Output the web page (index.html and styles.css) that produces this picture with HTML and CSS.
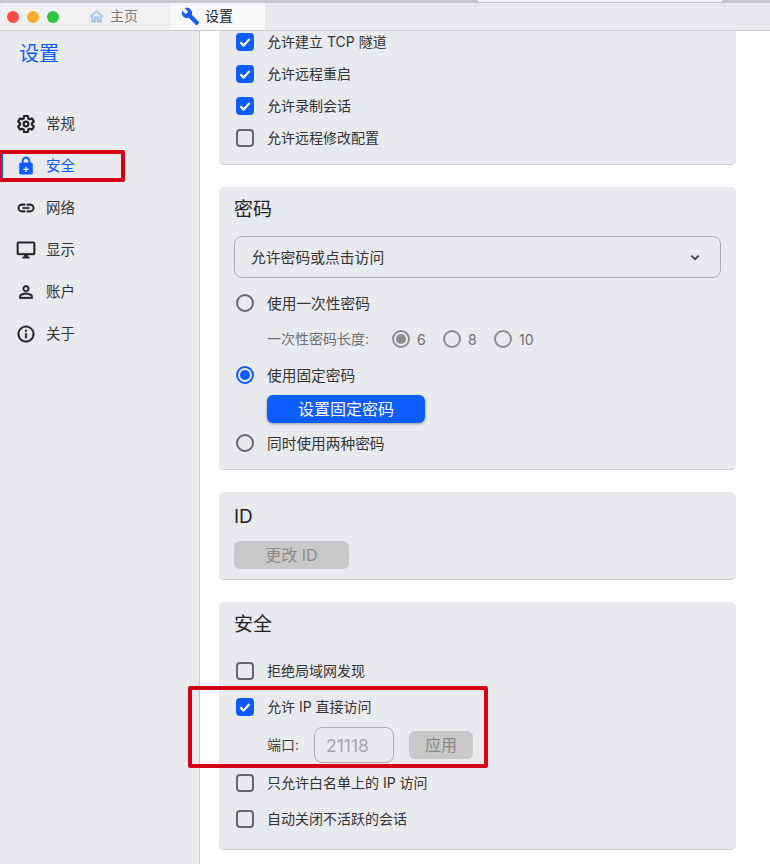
FILE: index.html
```html
<!DOCTYPE html>
<html lang="zh-CN">
<head>
    <meta charset="UTF-8">
    <meta name="viewport" content="width=device-width, initial-scale=1.0">
    <title>设置</title>
    <link rel="stylesheet" href="styles.css">
</head>
<body>
    <div class="window">
        <div class="top-strip"><div class="top-strip-light"></div></div>
        <div class="title-bar">
            <div class="traffic">
                <span class="dot dot-red"></span>
                <span class="dot dot-yellow"></span>
                <span class="dot dot-green"></span>
            </div>
            <div class="tab">
                <svg class="tab-icon home" viewBox="0 0 24 24"><path d="M12 5.69l5 4.5V18h-2v-6H9v6H7v-7.81l5-4.5M12 3L2 12h3v8h6v-6h2v6h6v-8h3L12 3z"/></svg>
                <span>主页</span>
            </div>
            <div class="tab tab-active">
                <svg class="tab-icon wrench" viewBox="0 0 24 24"><path d="M22.7 19l-9.1-9.1c.9-2.3.4-5-1.5-6.9-2-2-5-2.4-7.4-1.3L9 6 6 9 1.6 4.7C.4 7.1.9 10.1 2.9 12.1c1.9 1.9 4.6 2.4 6.9 1.5l9.1 9.1c.4.4 1 .4 1.4 0l2.3-2.3c.5-.4.5-1.1.1-1.4z"/></svg>
                <span>设置</span>
            </div>
        </div>

        <div class="body-row">
            <aside class="sidebar">
                <h1 class="side-title">设置</h1>
                <nav class="side-nav">
                    <a class="side-item">
                        <svg class="side-icon" viewBox="0 0 24 24"><path class="gear" d="M19.14 12.94c.04-.3.06-.61.06-.94 0-.32-.02-.64-.07-.94l2.03-1.58c.18-.14.23-.41.12-.61l-1.92-3.32c-.12-.22-.37-.29-.59-.22l-2.39.96c-.5-.38-1.03-.7-1.62-.94l-.36-2.54c-.04-.24-.24-.41-.48-.41h-3.84c-.24 0-.43.17-.47.41l-.36 2.54c-.59.24-1.13.57-1.62.94l-2.39-.96c-.22-.08-.47 0-.59.22L2.74 8.87c-.12.21-.08.47.12.61l2.03 1.58c-.05.3-.09.63-.09.94s.02.64.07.94l-2.03 1.58c-.18.14-.23.41-.12.61l1.92 3.32c.12.22.37.29.59.22l2.39-.96c.5.38 1.03.7 1.62.94l.36 2.54c.05.24.24.41.48.41h3.84c.24 0 .44-.17.47-.41l.36-2.54c.59-.24 1.13-.56 1.62-.94l2.39.96c.22.08.47 0 .59-.22l1.92-3.32c.12-.22.07-.47-.12-.61l-2.01-1.58z"/><circle class="gear" cx="12" cy="12" r="2.8"/></svg>
                        <span>常规</span>
                    </a>
                    <a class="side-item side-active">
                        <svg class="side-icon" viewBox="0 0 24 24"><path d="M18 8h-1V6c0-2.76-2.24-5-5-5S7 3.24 7 6v2H6c-1.1 0-2 .9-2 2v10c0 1.1.9 2 2 2h12c1.1 0 2-.9 2-2V10c0-1.1-.9-2-2-2zM9 6c0-1.66 1.34-3 3-3s3 1.34 3 3v2H9V6z"/><path class="lock-plus" d="M11.2 12.8h1.6v2.4h2.4v1.6h-2.4v2.4h-1.6v-2.4H8.8v-1.6h2.4z"/></svg>
                        <span>安全</span>
                    </a>
                    <a class="side-item">
                        <svg class="side-icon" viewBox="0 0 24 24"><path d="M3.9 12c0-1.71 1.39-3.1 3.1-3.1h4V7H7c-2.76 0-5 2.24-5 5s2.24 5 5 5h4v-1.9H7c-1.71 0-3.1-1.39-3.1-3.1zM8 13h8v-2H8v2zm9-6h-4v1.9h4c1.71 0 3.1 1.39 3.1 3.1s-1.39 3.1-3.1 3.1h-4V17h4c2.76 0 5-2.24 5-5s-2.24-5-5-5z"/></svg>
                        <span>网络</span>
                    </a>
                    <a class="side-item">
                        <svg class="side-icon" viewBox="0 0 24 24"><path d="M21 2H3c-1.1 0-2 .9-2 2v12c0 1.1.9 2 2 2h7v2H8v2h8v-2h-2v-2h7c1.1 0 2-.9 2-2V4c0-1.1-.9-2-2-2zm0 14H3V4h18v12z"/></svg>
                        <span>显示</span>
                    </a>
                    <a class="side-item">
                        <svg class="side-icon" viewBox="0 0 24 24"><path d="M12 5.9c1.16 0 2.1.94 2.1 2.1s-.94 2.1-2.1 2.1S9.9 9.16 9.9 8s.94-2.1 2.1-2.1m0 9c2.97 0 6.1 1.46 6.1 2.1v1.1H5.9V17c0-.64 3.13-2.1 6.1-2.1M12 4C9.79 4 8 5.79 8 8s1.79 4 4 4 4-1.79 4-4-1.79-4-4-4zm0 9c-2.67 0-8 1.34-8 4v3h16v-3c0-2.66-5.33-4-8-4z"/></svg>
                        <span>账户</span>
                    </a>
                    <a class="side-item">
                        <svg class="side-icon" viewBox="0 0 24 24"><path d="M11 7h2v2h-2zm0 4h2v6h-2zm1-9C6.48 2 2 6.48 2 12s4.48 10 10 10 10-4.48 10-10S17.52 2 12 2zm0 18c-4.41 0-8-3.59-8-8s3.59-8 8-8 8 3.59 8 8-3.59 8-8 8z"/></svg>
                        <span>关于</span>
                    </a>
                </nav>
            </aside>

            <main class="content">
                <section class="card card-scrolled">
                    <label class="row"><span class="check on"><svg viewBox="0 0 18 18"><path d="M4.4 9.4l3.2 3.1 6-6.4"/></svg></span><span class="row-text">允许建立 TCP 隧道</span></label>
                    <label class="row"><span class="check on"><svg viewBox="0 0 18 18"><path d="M4.4 9.4l3.2 3.1 6-6.4"/></svg></span><span class="row-text">允许远程重启</span></label>
                    <label class="row"><span class="check on"><svg viewBox="0 0 18 18"><path d="M4.4 9.4l3.2 3.1 6-6.4"/></svg></span><span class="row-text">允许录制会话</span></label>
                    <label class="row"><span class="check"></span><span class="row-text">允许远程修改配置</span></label>
                </section>

                <section class="card card-password">
                    <h2 class="card-title">密码</h2>
                    <div class="select">
                        <span>允许密码或点击访问</span>
                        <svg class="chevron" viewBox="0 0 12 8"><path d="M1.5 1.8L6 6l4.5-4.2"/></svg>
                    </div>
                    <label class="row"><span class="radio"></span><span class="row-text">使用一次性密码</span></label>
                    <div class="length-row">
                        <span class="length-label">一次性密码长度:</span>
                        <label class="mini-radio"><span class="radio grey on"></span>6</label>
                        <label class="mini-radio"><span class="radio grey"></span>8</label>
                        <label class="mini-radio"><span class="radio grey"></span>10</label>
                    </div>
                    <label class="row"><span class="radio blue on"></span><span class="row-text">使用固定密码</span></label>
                    <button class="btn-primary">设置固定密码</button>
                    <label class="row"><span class="radio"></span><span class="row-text">同时使用两种密码</span></label>
                </section>

                <section class="card card-id">
                    <h2 class="card-title">ID</h2>
                    <button class="btn-disabled btn-id">更改 ID</button>
                </section>

                <section class="card card-security">
                    <h2 class="card-title">安全</h2>
                    <label class="row"><span class="check"></span><span class="row-text">拒绝局域网发现</span></label>
                    <label class="row"><span class="check on"><svg viewBox="0 0 18 18"><path d="M4.4 9.4l3.2 3.1 6-6.4"/></svg></span><span class="row-text">允许 IP 直接访问</span></label>
                    <div class="port-row">
                        <span class="port-label">端口:</span>
                        <div class="port-input">21118</div>
                        <button class="btn-disabled btn-apply">应用</button>
                    </div>
                    <label class="row"><span class="check"></span><span class="row-text">只允许白名单上的 IP 访问</span></label>
                    <label class="row"><span class="check"></span><span class="row-text">自动关闭不活跃的会话</span></label>
                </section>
            </main>
        </div>

        <div class="mark mark-side"></div>
        <div class="mark mark-ip"></div>
    </div>
</body>
</html>
```

FILE: styles.css
```css
* {
    box-sizing: border-box;
    margin: 0;
    padding: 0;
}

html, body {
    height: 100%;
}

body {
    background: #fff;
    color: #2b2b2b;
    font-family: "Inter", "Noto Sans CJK SC", sans-serif;
    font-size: 14px;
    overflow: hidden;
}

.window {
    position: relative;
    width: 770px;
    height: 864px;
    display: flex;
    flex-direction: column;
    overflow: hidden;
}

.top-strip {
    height: 3px;
    flex: none;
    background: #c6c9ce;
}

.top-strip-light {
    width: 244px;
    height: 2px;
    margin-left: 478px;
    background: #f0f0ee;
}

.title-bar {
    height: 28px;
    flex: none;
    display: flex;
    align-items: stretch;
    background: #e9eaee;
    border-bottom: 1px solid #cbcbcf;
}

.traffic {
    width: 78px;
    display: flex;
    align-items: center;
    gap: 8px;
    padding-left: 7px;
    background: #f0f0f0;
    border-top-left-radius: 6px;
}

.dot {
    width: 12px;
    height: 12px;
    border-radius: 50%;
}

.dot-red { background: #fc4a49; }
.dot-yellow { background: #fcac28; }
.dot-green { background: #2ec53c; }

.tab {
    width: 93px;
    display: flex;
    align-items: center;
    gap: 5px;
    padding-left: 10px;
    color: #7d7d7d;
    background: #f0f0f0;
    font-size: 14px;
}

.tab span {
    padding-bottom: 3px;
}

.tab-active {
    width: 94px;
    color: #222;
    background: #f8f8f8;
}

.tab-icon {
    width: 17px;
    height: 17px;
}

.home { fill: #a3c4ef; stroke: #a3c4ef; stroke-width: 0.8; }
.wrench { fill: #1a5cf5; width: 19px; height: 19px; }

.body-row {
    flex: 1;
    min-height: 0;
    display: flex;
}

.sidebar {
    width: 200px;
    flex: none;
    background: #e9eaee;
    border-right: 1px solid #cbcbcf;
}

.side-title {
    font-size: 20px;
    font-weight: 400;
    line-height: 28px;
    color: #0d5cff;
    padding: 9px 0 0 19px;
}

.side-nav {
    margin-top: 35px;
    display: flex;
    flex-direction: column;
}

.side-item {
    position: relative;
    height: 42px;
    display: flex;
    align-items: center;
    gap: 10px;
    padding-left: 16px;
    color: #333;
    font-size: 14.5px;
}

.side-item span {
    padding-bottom: 4px;
}

.side-icon {
    width: 20px;
    height: 20px;
    fill: #222;
    stroke: #222;
    stroke-width: 0.4;
}

.side-icon .gear {
    fill: none;
    stroke: #222;
    stroke-width: 2.6;
}

.side-active {
    color: #0d5cff;
}

.side-active::before {
    content: "";
    position: absolute;
    left: 1px;
    top: 7px;
    bottom: 7px;
    width: 2px;
    background: #0d5cff;
}

.side-active .side-icon {
    fill: #0d5cff;
    stroke: #0d5cff;
}

.side-icon .lock-plus {
    fill: #fff;
    stroke: none;
}

.content {
    flex: 1;
    min-width: 0;
    padding: 0 34px 0 19px;
    overflow: hidden;
}

.card {
    background: #e9eaee;
    border-radius: 5px;
    border-bottom: 1px solid #cbcbcf;
    padding: 0 15px;
    margin-bottom: 22px;
}

.card-scrolled {
    margin-top: -21px;
    height: 155px;
    padding-top: 16px;
    border-radius: 0 0 5px 5px;
}

.card-password { height: 283px; }
.card-id { height: 88px; }
.card-security { height: 248px; }

.card-title {
    font-size: 19px;
    font-weight: 400;
    line-height: 26px;
    color: #222;
    padding-top: 10px;
    box-sizing: content-box;
}

.row {
    height: 32px;
    display: flex;
    align-items: center;
    gap: 13px;
    padding-left: 2px;
    font-size: 14px;
    color: #333;
}

.row-text {
    padding-bottom: 2px;
}

.card-password .row {
    font-size: 14.7px;
}

.check {
    width: 18px;
    height: 18px;
    flex: none;
    border: 2px solid #666;
    border-radius: 4px;
}

.check.on {
    background: #0d5cff;
    border-color: #0d5cff;
    position: relative;
}

.check svg {
    position: absolute;
    left: -2px;
    top: -2px;
    width: 18px;
    height: 18px;
    fill: none;
    stroke: #fff;
    stroke-width: 2.2;
}

.select {
    height: 42px;
    margin-top: 13px;
    margin-bottom: 9px;
    display: flex;
    align-items: center;
    justify-content: space-between;
    padding: 0 20px 0 16px;
    border: 1px solid #aeaeae;
    border-radius: 8px;
    color: #333;
    font-size: 14.8px;
}

.select span {
    padding-bottom: 2px;
}

.chevron {
    width: 10px;
    height: 7px;
    fill: none;
    stroke: #444;
    stroke-width: 2.2;
}

.radio {
    width: 18px;
    height: 18px;
    flex: none;
    border: 2px solid #666;
    border-radius: 50%;
    display: flex;
    align-items: center;
    justify-content: center;
}

.radio.on::after {
    content: "";
    width: 10px;
    height: 10px;
    border-radius: 50%;
    background: currentColor;
}

.radio.blue {
    border-color: #0d5cff;
    color: #0d5cff;
}

.radio.grey {
    border-color: #8c8c8c;
    color: #8c8c8c;
}

.length-row {
    height: 40px;
    display: flex;
    align-items: center;
    padding-left: 33px;
    color: #6f6f6f;
    font-size: 14px;
}

.length-label {
    width: 125px;
    padding-bottom: 2px;
}

.mini-radio {
    width: 51px;
    display: flex;
    align-items: center;
    gap: 7px;
}

.btn-primary {
    display: block;
    width: 158px;
    height: 28px;
    margin: 4px 0 4px 33px;
    padding-bottom: 2px;
    border: none;
    border-radius: 6px;
    background: #0d5cff;
    color: #fff;
    font: inherit;
    font-size: 16px;
    box-shadow: 0 1px 3px rgba(0, 0, 0, 0.35);
}

.btn-disabled {
    padding-bottom: 2px;
    border: none;
    border-radius: 6px;
    background: #c8c8c8;
    color: #8a8a8a;
    font: inherit;
    font-size: 16px;
}

.card-id .card-title {
    padding-top: 12px;
}

.btn-id {
    display: block;
    width: 115px;
    height: 28px;
    margin-top: 11px;
}

.card-security .card-title {
    margin-bottom: 15px;
}

.card-security .row {
    height: 36px;
}

.port-row {
    height: 40px;
    display: flex;
    align-items: center;
    padding-left: 33px;
}

.port-label {
    width: 47px;
    padding-bottom: 2px;
    font-size: 14px;
    color: #444;
}

.port-input {
    width: 80px;
    height: 36px;
    display: flex;
    align-items: center;
    padding-left: 11px;
    border: 1px solid #aeaeae;
    border-radius: 8px;
    color: #a6a6a6;
    font-size: 17.5px;
}

.btn-apply {
    width: 64px;
    height: 28px;
    margin-left: 15px;
}

.mark {
    position: absolute;
    border: 4px solid #d40016;
    border-radius: 2px;
}

.mark-side {
    left: -3px;
    top: 150px;
    width: 128px;
    height: 32px;
}

.mark-ip {
    left: 188px;
    top: 686px;
    width: 300px;
    height: 82px;
}
```
